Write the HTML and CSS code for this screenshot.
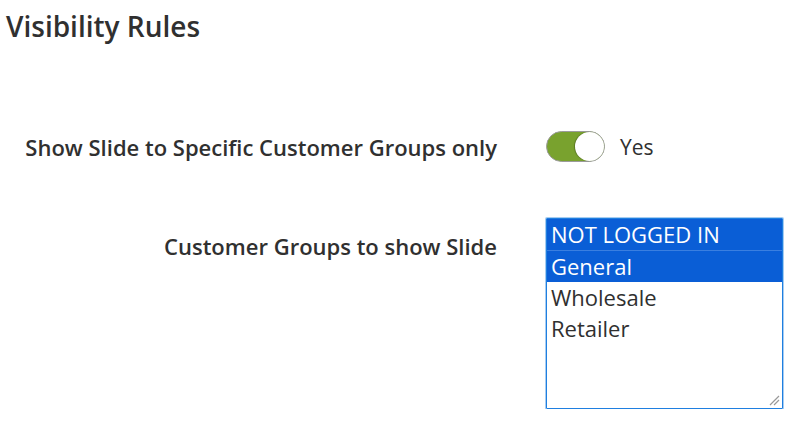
FILE: index.html
```html
<!DOCTYPE html>
<html>
<head>
<meta charset="utf-8">
<link rel="stylesheet" href="styles.css">
</head>
<body>
<div class="page">
  <h2 class="title">Visibility Rules</h2>
  <div class="fields">
    <div class="row row-toggle">
      <div class="label">Show Slide to Specific Customer Groups only</div>
      <div class="control">
        <span class="toggle"><span class="knob"></span></span>
        <span class="toggle-text">Yes</span>
      </div>
    </div>
    <div class="row row-select">
      <div class="label">Customer Groups to show Slide</div>
      <div class="control">
        <div class="multiselect">
          <div class="opt selected">NOT LOGGED IN</div>
          <div class="opt selected">General</div>
          <div class="opt">Wholesale</div>
          <div class="opt">Retailer</div>
          <svg class="grip" width="12" height="12" viewBox="0 0 12 12"><path d="M2 11 L11 2 M6 11 L11 6" stroke="#999" stroke-width="1.2" fill="none"/></svg>
        </div>
      </div>
    </div>
  </div>
</div>
</body>
</html>
```
FILE: styles.css
```css
html, body {
  margin: 0;
  padding: 0;
  background: #fff;
}
.page {
  font-family: "Open Sans", sans-serif;
  color: #303030;
  padding: 8px 0 0 6px;
}
.title {
  margin: 0;
  font-size: 28px;
  font-weight: 600;
  line-height: 36px;
  color: #303030;
}
.fields {
  padding-top: 87px;
}
.row {
  display: flex;
  align-items: flex-start;
}
.label {
  width: 491px;
  text-align: right;
  font-size: 22px;
  font-weight: 600;
  color: #303030;
  box-sizing: border-box;
  white-space: nowrap;
}
.control {
  margin-left: 49px;
  display: flex;
  align-items: center;
}
.row-toggle .label {
  line-height: 32px;
}
.row-toggle {
  margin-bottom: 55px;
}
.toggle {
  position: relative;
  width: 59px;
  height: 31px;
  border-radius: 16px;
  background: #79a22e;
  box-sizing: border-box;
  border: 1px solid #9b9b9b;
  display: inline-block;
}
.knob {
  position: absolute;
  right: 0;
  top: 0;
  width: 29px;
  height: 29px;
  border-radius: 50%;
  background: #fff;
  box-shadow: -1px 0 1px rgba(0,0,0,0.25);
}
.toggle-text {
  margin-left: 15px;
  font-size: 21px;
  color: #303030;
}
.row-select .label {
  padding-top: 12px;
  line-height: 32px;
}
.multiselect {
  position: relative;
  width: 237px;
  height: 191px;
  box-sizing: border-box;
  border: 1px solid #1f7fe0;
  box-shadow: 0 0 0 1px rgba(60, 143, 224, 0.45);
  border-radius: 1px;
  background: #fff;
}
.opt {
  height: 31px;
  line-height: 31px;
  padding-left: 4px;
  font-size: 22px;
  color: #303030;
  white-space: nowrap;
}
.opt.selected {
  background: #0a5ed6;
  color: #fff;
}
.opt.selected + .opt.selected {
  border-top: 1px solid #3a7fe0;
}
.grip {
  position: absolute;
  right: 2px;
  bottom: 2px;
}
```
